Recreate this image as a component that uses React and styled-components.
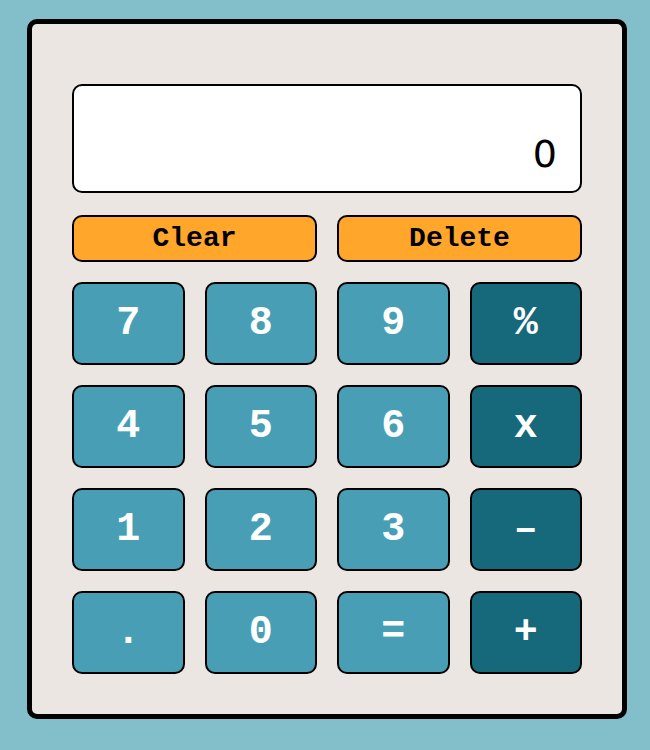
import React from "react";
import styled, { createGlobalStyle } from "styled-components";

const Global = createGlobalStyle`
  html, body { margin: 0; padding: 0; background: #83bfcb; }
  body { font-family: "Liberation Mono", monospace; }
`;

const Page = styled.div`
  padding: 19px 0 0 27px;
`;

const Card = styled.div`
  box-sizing: border-box;
  width: 600px;
  background: #ebe6e2;
  border: 5px solid #000;
  border-radius: 10px;
  padding: 60px 40px 40px;
  display: flex;
  flex-direction: column;
`;

const Display = styled.div`
  box-sizing: border-box;
  height: 109px;
  background: #fff;
  border: 2px solid #000;
  border-radius: 10px;
  display: flex;
  justify-content: flex-end;
  align-items: flex-end;
  padding: 0 23px 15px;
  font-family: "DejaVu Sans", sans-serif;
  font-size: 38px;
  color: #000;
`;

const TopRow = styled.div`
  display: grid;
  grid-template-columns: 1fr 1fr;
  gap: 20px;
  margin-top: 22px;
`;

const ActionButton = styled.button`
  box-sizing: border-box;
  height: 47px;
  background: #ffa62b;
  border: 2px solid #000;
  border-radius: 10px;
  font-family: "Liberation Mono", "Courier New", monospace;
  font-weight: bold;
  font-size: 28px;
  color: #000;
  padding: 0;
`;

const Keys = styled.div`
  display: grid;
  grid-template-columns: repeat(4, 1fr);
  grid-auto-rows: 83px;
  gap: 20px;
  margin-top: 20px;
`;

const Key = styled.button`
  box-sizing: border-box;
  background: ${(p) => (p.$op ? "#16697a" : "#489fb5")};
  border: 2px solid #000;
  border-radius: 10px;
  font-family: "Liberation Mono", "Courier New", monospace;
  font-weight: bold;
  font-size: 40px;
  color: #fff;
  padding: 0;
`;

const rows = [
  ["7", "8", "9", "%"],
  ["4", "5", "6", "x"],
  ["1", "2", "3", "–"],
  [".", "0", "=", "+"],
];

export default function App() {
  return (
    <>
      <Global />
      <Page>
        <Card>
          <Display>0</Display>
          <TopRow>
            <ActionButton>Clear</ActionButton>
            <ActionButton>Delete</ActionButton>
          </TopRow>
          <Keys>
            {rows.flat().map((k, i) => (
              <Key key={i} $op={i % 4 === 3}>
                {k}
              </Key>
            ))}
          </Keys>
        </Card>
      </Page>
    </>
  );
}
